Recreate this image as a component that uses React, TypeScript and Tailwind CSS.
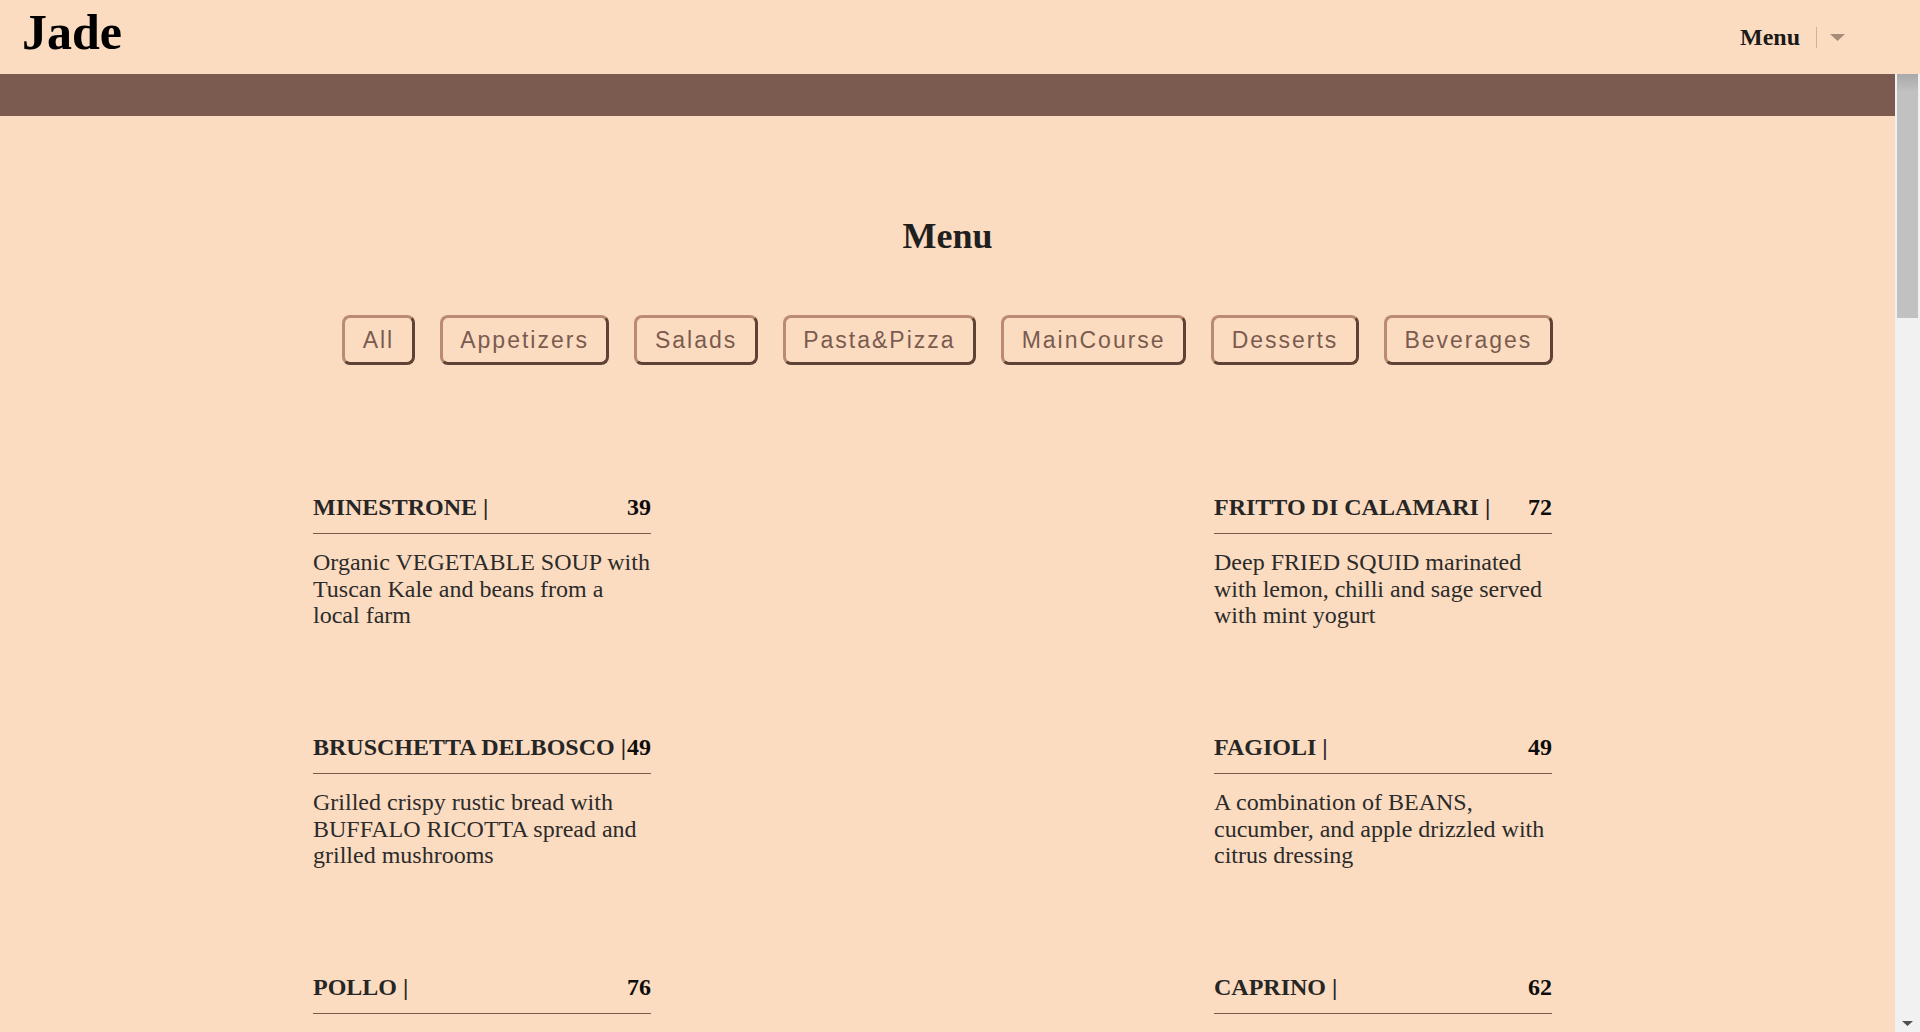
import React from "react";

type Item = { name: string; price: number; desc: string };

const items: Item[] = [
  { name: "MINESTRONE |", price: 39, desc: "Organic VEGETABLE SOUP with Tuscan Kale and beans from a local farm" },
  { name: "FRITTO DI CALAMARI |", price: 72, desc: "Deep FRIED SQUID marinated with lemon, chilli and sage served with mint yogurt" },
  { name: "BRUSCHETTA DELBOSCO |", price: 49, desc: "Grilled crispy rustic bread with BUFFALO RICOTTA spread and grilled mushrooms" },
  { name: "FAGIOLI |", price: 49, desc: "A combination of BEANS, cucumber, and apple drizzled with citrus dressing" },
  { name: "POLLO |", price: 76, desc: "Roasted free range CHICKEN with rosemary potatoes and a light lemon sauce" },
  { name: "CAPRINO |", price: 62, desc: "Warm GOAT CHEESE salad with roasted beets, walnuts and honey dressing" },
];

const categories = ["All", "Appetizers", "Salads", "Pasta&Pizza", "MainCourse", "Desserts", "Beverages"];

const serif = "font-['Liberation_Serif','Times_New_Roman',serif]";

function MenuItem({ item }: { item: Item }) {
  return (
    <div className="w-[338px]">
      <div className="flex justify-between items-start border-b border-[#7b5a50] pb-[14px]">
        <span className="whitespace-nowrap text-[24px] leading-[24px] font-bold text-[#262626]">{item.name}</span>
        <span className="shrink-0 whitespace-nowrap text-[24px] leading-[24px] font-bold text-[#0d0d0d]">{item.price}</span>
      </div>
      <p className="mt-[15px] w-[342px] text-[24px] leading-[26.5px] text-[#2b2b2b]">{item.desc}</p>
    </div>
  );
}

function Scrollbar() {
  return (
    <div className="w-[25px] shrink-0 bg-[#f1f1f1] flex flex-col">
      <div className="mx-[2px] h-[244px] bg-[#c1c1c1] flex flex-col">
        <div className="h-[18px] bg-gradient-to-b from-[#a9a9a9] to-[#c1c1c1]" />
      </div>
      <div className="mt-auto h-[17px] flex items-center justify-center">
        <svg width="11" height="5" viewBox="0 0 11 5">
          <polygon points="0,0 11,0 5.5,5" fill="#505050" />
        </svg>
      </div>
    </div>
  );
}

export default function App() {
  return (
    <div className={`h-screen flex flex-col bg-[#fcdcc0] ${serif}`}>
      <header className="h-[74px] shrink-0 flex items-center justify-between pl-[22px] pr-[75px]">
        <div className="self-start mt-[8px] text-[50px] leading-[48px] font-bold text-black">Jade</div>
        <div className="flex items-center">
          <span className="text-[24px] leading-[24px] font-bold text-[#1a1a1a]">Menu</span>
          <span className="ml-[16px] w-px h-[21px] bg-[#d2b09a]" />
          <svg className="ml-[13px]" width="15" height="7" viewBox="0 0 15 7">
            <polygon points="0,0 15,0 7.5,7" fill="#a88c7a" />
          </svg>
        </div>
      </header>
      <div className="flex-1 min-h-0 flex">
        <main className="flex-1 min-w-0 overflow-hidden">
          <div className="h-[42px] bg-[#7b5a50]" />
          <h2 className="mt-[102px] text-center text-[36px] leading-[36px] font-bold text-[#1f1f1f]">Menu</h2>
          <div className="mt-[61px] flex justify-center gap-[25px]">
            {categories.map((c) => (
              <button
                key={c}
                className="h-[50px] px-[17.5px] flex items-center rounded-[8px] border-[3px] border-t-[#bb8a74] border-l-[#bb8a74] border-b-[#5e4236] border-r-[#5e4236] bg-transparent font-['Liberation_Sans',Arial,sans-serif] text-[23px] tracking-[2px] text-[#7a5b50]"
              >
                {c}
              </button>
            ))}
          </div>
          <div className="mx-auto mt-[130px] w-[1269px] pr-[30px] grid grid-cols-[338px_338px] justify-between gap-y-[106.5px]">
            {items.map((it) => (
              <MenuItem key={it.name} item={it} />
            ))}
          </div>
        </main>
        <Scrollbar />
      </div>
    </div>
  );
}
